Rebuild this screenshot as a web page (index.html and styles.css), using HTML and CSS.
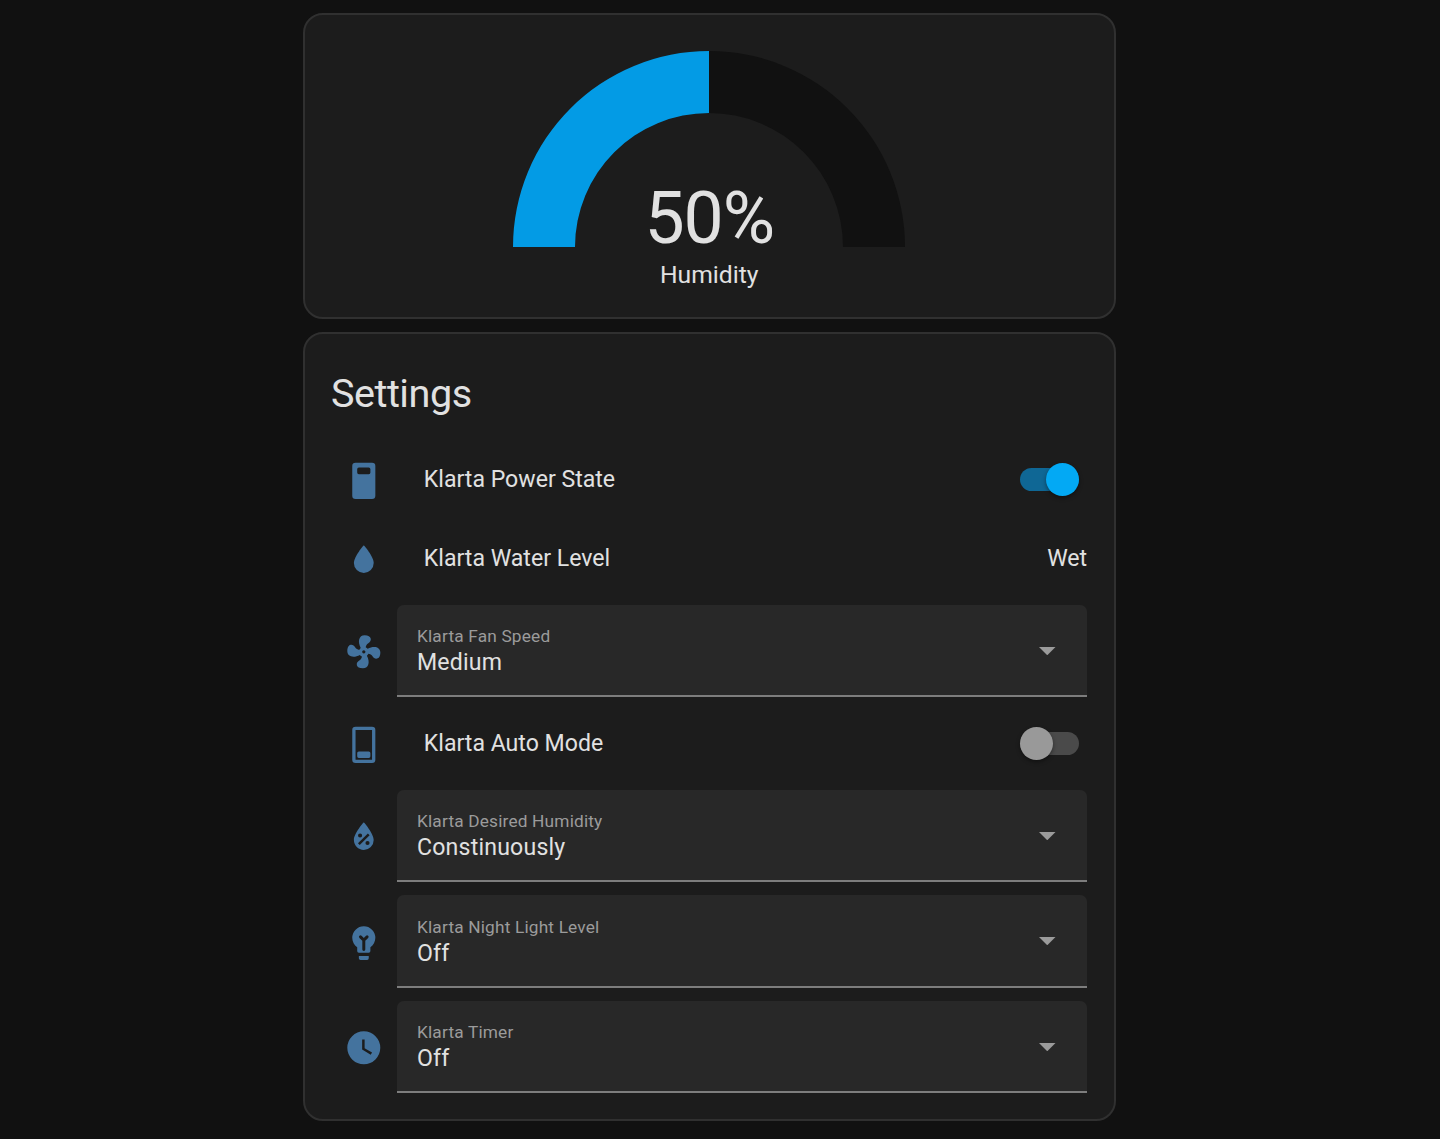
FILE: index.html
```html
<!DOCTYPE html>
<html lang="en">
<head>
<meta charset="utf-8">
<title>Klarta Humidifier</title>
<link rel="stylesheet" href="styles.css">
</head>
<body>
<main class="column">
  <section class="card gauge-card">
    <svg class="gauge" viewBox="0 0 392 196">
      <path class="gauge-track" d="M196 0A196 196 0 0 1 392 196H330A134 134 0 0 0 196 62Z"/>
      <path class="gauge-value" d="M0 196A196 196 0 0 1 196 0V62A134 134 0 0 0 62 196Z"/>
    </svg>
    <div class="gauge-number">50%</div>
    <div class="gauge-name">Humidity</div>
  </section>

  <section class="card settings">
    <h1 class="title">Settings</h1>
    <div class="rows">
      <div class="row">
        <div class="icon"><svg viewBox="0 0 24 24"><path fill-rule="evenodd" d="M7 1H17A2 2 0 0 1 19 3V21A2 2 0 0 1 17 23H7A2 2 0 0 1 5 21V3A2 2 0 0 1 7 1M9 4A1 1 0 0 0 8 5V7A1 1 0 0 0 9 8H15A1 1 0 0 0 16 7V5A1 1 0 0 0 15 4Z"/></svg></div>
        <div class="name">Klarta Power State</div>
        <div class="toggle on"><span class="thumb"></span></div>
      </div>
      <div class="row">
        <div class="icon"><svg viewBox="0 0 24 24"><path d="M12,20A6,6 0 0,1 6,14C6,10 12,3.25 12,3.25C12,3.25 18,10 18,14A6,6 0 0,1 12,20Z"/></svg></div>
        <div class="name">Klarta Water Level</div>
        <div class="state">Wet</div>
      </div>
      <div class="row">
        <div class="icon"><svg viewBox="0 0 24 24"><path d="M12,11A1,1 0 0,0 11,12A1,1 0 0,0 12,13A1,1 0 0,0 13,12A1,1 0 0,0 12,11M12.5,2C17,2 17.11,5.57 14.75,6.75C13.76,7.24 13.32,8.29 13.13,9.22C13.61,9.42 14.03,9.73 14.35,10.13C18.05,8.13 22.03,8.92 22.03,12.5C22.03,17 18.46,17.1 17.28,14.73C16.78,13.74 15.72,13.3 14.79,13.11C14.59,13.59 14.28,14 13.88,14.34C15.87,18.03 15.08,22 11.5,22C7,22 6.91,18.42 9.27,17.24C10.25,16.75 10.69,15.71 10.89,14.79C10.4,14.59 9.97,14.27 9.65,13.87C5.96,15.85 2,15.07 2,11.5C2,7 5.56,6.89 6.74,9.26C7.24,10.25 8.29,10.68 9.22,10.87C9.41,10.39 9.73,9.97 10.14,9.65C8.15,5.96 8.94,2 12.5,2Z"/></svg></div>
        <div class="select">
          <div class="field"><div class="label">Klarta Fan Speed</div><div class="value">Medium</div></div>
          <svg class="arrow" viewBox="0 0 10 5"><path d="M0 0H10L5 5Z"/></svg>
        </div>
      </div>
      <div class="row">
        <div class="icon"><svg viewBox="0 0 24 24"><path fill-rule="evenodd" d="M7 1H17A2 2 0 0 1 19 3V21A2 2 0 0 1 17 23H7A2 2 0 0 1 5 21V3A2 2 0 0 1 7 1M7 3V21H17V3ZM9 16H15A1 1 0 0 1 16 17V19A1 1 0 0 1 15 20H9A1 1 0 0 1 8 19V17A1 1 0 0 1 9 16Z"/></svg></div>
        <div class="name">Klarta Auto Mode</div>
        <div class="toggle"><span class="thumb"></span></div>
      </div>
      <div class="row">
        <div class="icon"><svg viewBox="0 0 24 24"><path fill-rule="evenodd" d="M12,3.25C12,3.25 6,10 6,14C6,17.32 8.69,20 12,20A6,6 0 0,0 18,14C18,10 12,3.25 12,3.25M14.47,9.97L15.53,11.03L9.53,17.03L8.47,15.97M9.75,10A1.25,1.25 0 0,1 11,11.25A1.25,1.25 0 0,1 9.75,12.5A1.25,1.25 0 0,1 8.5,11.25A1.25,1.25 0 0,1 9.75,10M14.25,14.5A1.25,1.25 0 0,1 15.5,15.75A1.25,1.25 0 0,1 14.25,17A1.25,1.25 0 0,1 13,15.75A1.25,1.25 0 0,1 14.25,14.5Z"/></svg></div>
        <div class="select">
          <div class="field"><div class="label">Klarta Desired Humidity</div><div class="value">Constinuously</div></div>
          <svg class="arrow" viewBox="0 0 10 5"><path d="M0 0H10L5 5Z"/></svg>
        </div>
      </div>
      <div class="row">
        <div class="icon"><svg viewBox="0 0 24 24"><path d="M12 2A7 7 0 0 1 19 9C19 11.4 17.8 13.5 16 14.7V17A1 1 0 0 1 15 18H9A1 1 0 0 1 8 17V14.7C6.2 13.5 5 11.4 5 9A7 7 0 0 1 12 2M9 20H15V21.4A1 1 0 0 1 14 22.4H10A1 1 0 0 1 9 21.4Z"/><path class="filament" d="M10 8.4L12 10.4L14 8.4M12 10.2V16"/></svg></div>
        <div class="select">
          <div class="field"><div class="label">Klarta Night Light Level</div><div class="value">Off</div></div>
          <svg class="arrow" viewBox="0 0 10 5"><path d="M0 0H10L5 5Z"/></svg>
        </div>
      </div>
      <div class="row">
        <div class="icon"><svg viewBox="0 0 24 24"><path d="M12,2A10,10 0 0,0 2,12A10,10 0 0,0 12,22A10,10 0 0,0 22,12A10,10 0 0,0 12,2M16.2,16.2L11,13V7H12.5V12.2L17,14.9L16.2,16.2Z"/></svg></div>
        <div class="select">
          <div class="field"><div class="label">Klarta Timer</div><div class="value">Off</div></div>
          <svg class="arrow" viewBox="0 0 10 5"><path d="M0 0H10L5 5Z"/></svg>
        </div>
      </div>
    </div>
  </section>
</main>
</body>
</html>
```
FILE: styles.css
```css
* { box-sizing: border-box; }

body {
  margin: 0;
  background: #111;
  color: #e1e1e1;
  font-family: Roboto, sans-serif;
  font-size: 23.1px;
}

.column {
  display: flex;
  flex-direction: column;
  gap: 13px;
  width: 812.5px;
  margin-left: 303px;
  padding-top: 13px;
}

.card {
  background: #1c1c1c;
  border: 2px solid #303030;
  border-radius: 20px;
}

.gauge-card {
  display: flex;
  flex-direction: column;
  align-items: center;
  height: 306px;
  padding-top: 36.4px;
}

.gauge {
  flex: none;
  width: 392px;
  height: 196px;
}

.gauge-track { fill: #111; }
.gauge-value { fill: #039be5; }

.gauge-number {
  margin-top: -70.5px;
  font-size: 71.5px;
  line-height: 84px;
  letter-spacing: -1px;
}

.gauge-name {
  margin-top: -.5px;
  font-size: 24.7px;
  line-height: 30px;
}

.settings {
  height: 789px;
  padding: 0 26.4px;
}

.title {
  display: flex;
  align-items: center;
  height: 112.4px;
  margin: 0;
  padding-top: 6px;
  font-size: 39.6px;
  font-weight: 400;
  letter-spacing: -0.475px;
  text-indent: -.5px;
}

.rows {
  display: flex;
  flex-direction: column;
  gap: 13.2px;
}

.row {
  display: flex;
  align-items: center;
  min-height: 66px;
}

.icon {
  flex: none;
  display: flex;
  justify-content: center;
  width: 66px;
  padding: 2.5px 1.4px 0 0;
}

.icon svg {
  width: 39.6px;
  height: 39.6px;
  fill: #44739e;
}

.icon .filament {
  fill: none;
  stroke: #1c1c1c;
  stroke-width: 1.8;
  stroke-linecap: round;
}

.name {
  flex: 1;
  padding-left: 26.4px;
}

.state, .name { padding-top: .6px; }

.toggle {
  display: flex;
  align-items: center;
  width: 59.4px;
  height: 23.1px;
  margin-right: 8px;
  border-radius: 12px;
  background: #4a4a4a;
}

.thumb {
  flex: none;
  width: 33px;
  height: 33px;
  border-radius: 50%;
  background: #999;
  box-shadow: 0 2px 4px rgba(0, 0, 0, .4);
}

.toggle.on {
  justify-content: flex-end;
  background: #0f6795;
}

.toggle.on .thumb { background: #03a9f4; }

.select {
  flex: 1;
  display: flex;
  align-items: center;
  justify-content: space-between;
  height: 92.4px;
  padding: 1px 31.4px 0 19.6px;
  background: #282828;
  border-bottom: 2px solid #7d7d7d;
  border-radius: 6.6px 6.6px 0 0;
}

.field { padding-top: 1px; }

.label {
  color: #9b9b9b;
  font-size: 17.3px;
  line-height: 24px;
  letter-spacing: .17px;
}

.value {
  line-height: 29px;
  letter-spacing: .2px;
}

.arrow {
  width: 16.5px;
  height: 8.25px;
  margin-top: 1px;
  fill: #9b9b9b;
}
```
